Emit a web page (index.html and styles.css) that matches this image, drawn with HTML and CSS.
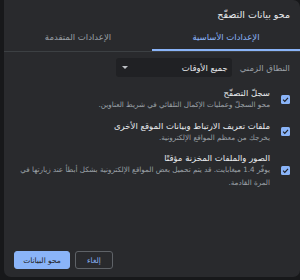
FILE: index.html
```html
<!DOCTYPE html>
<html lang="ar" dir="rtl">
<head>
<meta charset="utf-8">
<link rel="stylesheet" href="styles.css">
</head>
<body>
<div class="dialog">
  <div class="title">محو بيانات التصفّح</div>
  <div class="tabs">
    <div class="tab active">الإعدادات الأساسية</div>
    <div class="tab">الإعدادات المتقدمة</div>
  </div>
  <div class="content">
    <div class="range">
      <span class="range-label">النطاق الزمني</span>
      <div class="select">
        <span>جميع الأوقات</span>
        <span class="arrow"></span>
      </div>
    </div>
    <div class="option">
      <span class="check"><svg viewBox="0 0 10 10"><path d="M2.3 5.2 L4.2 7 L7.8 3.2" fill="none" stroke="#202124" stroke-width="1.3"/></svg></span>
      <div class="text">
        <div class="opt-title">سجلّ التصفّح</div>
        <div class="opt-desc">محو السجلّ وعمليات الإكمال التلقائي في شريط العناوين.</div>
      </div>
    </div>
    <div class="option">
      <span class="check"><svg viewBox="0 0 10 10"><path d="M2.3 5.2 L4.2 7 L7.8 3.2" fill="none" stroke="#202124" stroke-width="1.3"/></svg></span>
      <div class="text">
        <div class="opt-title">ملفات تعريف الارتباط وبيانات الموقع الأخرى</div>
        <div class="opt-desc">يخرجك من معظم المواقع الإلكترونية.</div>
      </div>
    </div>
    <div class="option">
      <span class="check"><svg viewBox="0 0 10 10"><path d="M2.3 5.2 L4.2 7 L7.8 3.2" fill="none" stroke="#202124" stroke-width="1.3"/></svg></span>
      <div class="text">
        <div class="opt-title">الصور والملفات المخزنة مؤقتًا</div>
        <div class="opt-desc">يوفّر 1.4 ميغابايت. قد يتم تحميل بعض المواقع الإلكترونية بشكل أبطأ عند زيارتها في المرة القادمة.</div>
      </div>
    </div>
  </div>
  <div class="buttons">
    <button class="btn cancel">إلغاء</button>
    <button class="btn primary">محو البيانات</button>
  </div>
</div>
</body>
</html>
```
FILE: styles.css
```css
html, body {
  margin: 0;
  padding: 0;
  background: #17181a;
  width: 300px;
  height: 280px;
  overflow: hidden;
  font-family: "DejaVu Sans", sans-serif;
}
.dialog {
  width: 296px;
  height: 277px;
  margin-left: 1px;
  background: #292a2d;
  border-radius: 0 7px 7px 7px;
  display: flex;
  flex-direction: column;
  color: #e8eaed;
  box-sizing: border-box;
}
.title {
  font-size: 9.5px;
  line-height: 12px;
  padding: 9px 10px 0 10px;
  color: #e8eaed;
}
.tabs {
  display: flex;
  margin-top: 3px;
  border-bottom: 1px solid #3c4043;
}
.tab {
  flex: 1;
  text-align: center;
  font-size: 8.5px;
  line-height: 12px;
  padding: 7px 0 6px 0;
  color: #9aa0a6;
  border-bottom: 2px solid transparent;
}
.tab.active {
  color: #8ab4f8;
  border-bottom-color: #8ab4f8;
}
.content {
  padding: 0 10px;
}
.range {
  display: flex;
  align-items: center;
  gap: 8px;
  margin-top: 6px;
}
.range-label {
  font-size: 8.5px;
  color: #9aa0a6;
  white-space: nowrap;
}
.select {
  width: 116px;
  height: 19px;
  background: #202124;
  border-radius: 3px;
  display: flex;
  align-items: center;
  justify-content: space-between;
  padding: 0 4px 0 6px;
  box-sizing: border-box;
  font-size: 8.5px;
  color: #e8eaed;
}
.arrow {
  width: 0;
  height: 0;
  border-left: 3px solid transparent;
  border-right: 3px solid transparent;
  border-top: 3px solid #bdc1c6;
}
.option {
  display: flex;
  align-items: center;
  gap: 11px;
  margin-top: 10px;
}
.option + .option {
  margin-top: 8px;
}
.check {
  flex: none;
  width: 9px;
  height: 9px;
  background: #8ab4f8;
  border-radius: 1.5px;
  display: flex;
}
.check svg {
  width: 9px;
  height: 9px;
}
.text {
  flex: 1;
}
.opt-title {
  font-size: 8.5px;
  line-height: 12px;
  color: #e8eaed;
}
.opt-desc {
  font-size: 7.2px;
  line-height: 12.5px;
  color: #9aa0a6;
}
.buttons {
  margin-top: auto;
  display: flex;
  justify-content: flex-end;
  gap: 5px;
  padding: 0 10px 8px 10px;
}
.btn {
  font-family: "DejaVu Sans", sans-serif;
  font-size: 7.5px;
  height: 18px;
  border-radius: 3px;
  padding: 0;
  cursor: pointer;
}
.cancel {
  width: 38px;
  background: transparent;
  border: 1px solid #5f6368;
  color: #8ab4f8;
}
.primary {
  width: 56px;
  background: #8ab4f8;
  border: 1px solid #8ab4f8;
  color: #202124;
}
```
